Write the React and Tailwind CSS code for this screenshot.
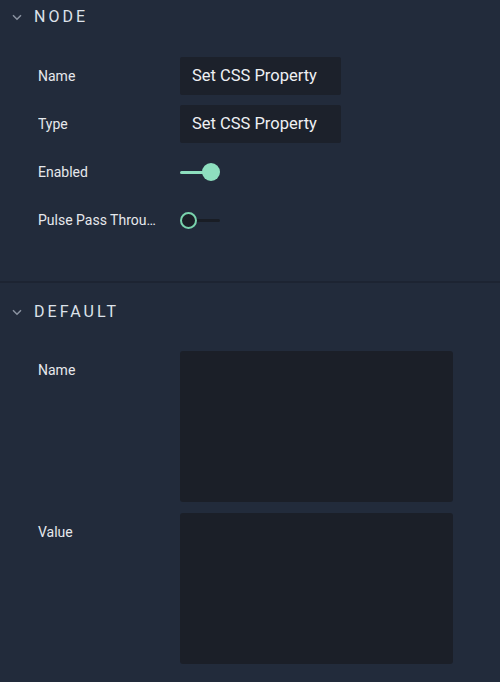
import React from "react";

const font = { fontFamily: "Roboto, 'Noto Sans', sans-serif" };

function Chevron() {
  return (
    <svg width="10" height="7" viewBox="0 0 10 7" className="text-[#8b93a1]">
      <path d="M1 1.2 L5 5.2 L9 1.2" fill="none" stroke="currentColor" strokeWidth="1.5" />
    </svg>
  );
}

function SectionHeader({ title }) {
  return (
    <div className="flex items-center h-[34px] pl-[12px]">
      <Chevron />
      <span className="ml-[12px] text-[16px] tracking-[0.19em] text-[#dde2ea] font-normal">{title}</span>
    </div>
  );
}

function Row({ label, children, className = "" }) {
  return (
    <div className={"flex items-center " + className}>
      <div className="w-[121px] ml-[38px] mr-[21px] text-[14px] text-[#e6e8ec] truncate shrink-0">
        {label}
      </div>
      <div>{children}</div>
    </div>
  );
}

function TextBox({ value }) {
  return (
    <div className="w-[161px] h-[38px] bg-[#1c212b] rounded-[2px] flex items-center pl-[12px] text-[16.5px] text-[#eef0f3]">
      {value}
    </div>
  );
}

function Toggle({ on }) {
  return (
    <div className="relative w-[41px] h-[18px] flex items-center">
      {on ? (
        <>
          <div className="h-[3px] w-[28px] bg-[#8edfbf] rounded-full" />
          <div className="absolute left-[22px] top-[0px] w-[18px] h-[18px] rounded-full bg-[#8edfbf]" />
        </>
      ) : (
        <>
          <div className="ml-[12px] h-[3px] w-[28px] bg-[#191d25] rounded-full" />
          <div className="absolute left-0 top-[1px] w-[17px] h-[17px] rounded-full border-2 border-[#79d3ad] bg-[#1b1f27]" />
        </>
      )}
    </div>
  );
}

function AreaRow({ label }) {
  return (
    <div className="flex items-start">
      <div className="w-[142px] pl-[38px] box-content pt-[9px] text-[14px] text-[#e6e8ec] shrink-0">{label}</div>
      <div className="w-[273px] h-[151px] bg-[#1b1f28] rounded-[3px]" />
    </div>
  );
}

export default function App() {
  return (
    <div className="w-[500px] h-[682px] bg-[#222b3b] overflow-hidden" style={font}>
      <div>
        <SectionHeader title="NODE" />
        <div className="pt-[23px] pb-[42px] flex flex-col gap-[10px]">
          <Row label="Name">
            <TextBox value="Set CSS Property" />
          </Row>
          <Row label="Type">
            <TextBox value="Set CSS Property" />
          </Row>
          <Row label="Enabled" className="h-[38px]">
            <Toggle on />
          </Row>
          <Row label="Pulse Pass Through" className="h-[38px]">
            <Toggle on={false} />
          </Row>
        </div>
      </div>
      <div className="h-[2px] bg-[#1d2432]" />
      <div className="pt-[12px]">
        <SectionHeader title="DEFAULT" />
        <div className="pt-[22px] flex flex-col gap-[11px]">
          <AreaRow label="Name" />
          <AreaRow label="Value" />
        </div>
      </div>
    </div>
  );
}
